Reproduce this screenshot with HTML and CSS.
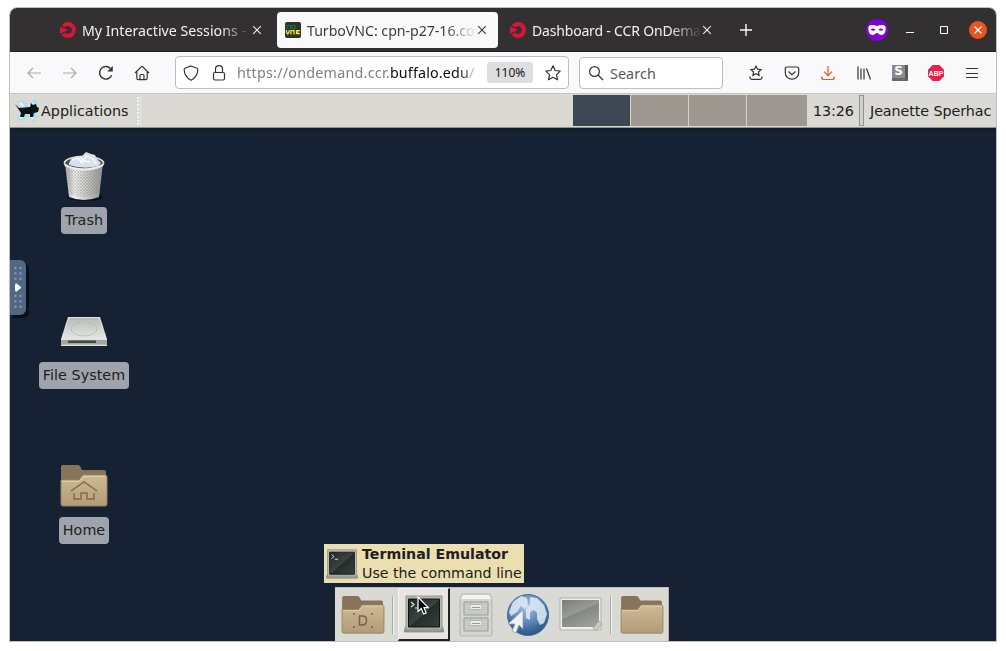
FILE: index.html
```html
<!DOCTYPE html>
<html lang="en">
<head>
<meta charset="utf-8">
<title>TurboVNC: cpn-p27-16</title>
<link rel="stylesheet" href="styles.css">
</head>
<body>
<svg class="defs" width="0" height="0" aria-hidden="true">
  <defs>
    <linearGradient id="tan" x1="0" y1="0" x2="0" y2="1"><stop offset="0" stop-color="#cdba94"/><stop offset="1" stop-color="#b19c78"/></linearGradient>
    <linearGradient id="metal" x1="0" y1="0" x2="1" y2="0"><stop offset="0" stop-color="#a3a3a0"/><stop offset=".25" stop-color="#eeeeec"/><stop offset=".6" stop-color="#c4c4c1"/><stop offset="1" stop-color="#90908d"/></linearGradient>
    <linearGradient id="screen" x1="0" y1="0" x2="1" y2="1"><stop offset="0" stop-color="#222825"/><stop offset=".5" stop-color="#3b4440"/><stop offset=".52" stop-color="#252d2a"/><stop offset="1" stop-color="#36413c"/></linearGradient>
    <linearGradient id="drive" x1="0" y1="0" x2="0" y2="1"><stop offset="0" stop-color="#b9bcb7"/><stop offset="1" stop-color="#e6e7e4"/></linearGradient>
    <linearGradient id="gray" x1="0" y1="0" x2=".6" y2="1"><stop offset="0" stop-color="#7b7d78"/><stop offset=".5" stop-color="#989a95"/><stop offset=".54" stop-color="#858782"/><stop offset="1" stop-color="#9a9c97"/></linearGradient>
    <radialGradient id="globe" cx=".45" cy=".3" r=".7"><stop offset="0" stop-color="#a9c5e5"/><stop offset=".6" stop-color="#5681b5"/><stop offset="1" stop-color="#2d527f"/></radialGradient>
    <pattern id="mesh" width="3" height="3" patternUnits="userSpaceOnUse"><path d="M0 0l3 3M3 0L0 3" stroke="#777" stroke-width=".6"/></pattern>
    <symbol id="folder" viewBox="0 0 48 44">
      <path d="M1 3q0-2 2-2h15q2 0 3 3l1 2h22q2 0 2 2v10H1z" fill="#87745a"/>
      <path d="M1 16h18l4-5h22q2 0 2 2v27q0 2-2 2H3q-2 0-2-2z" fill="url(#tan)" stroke="#96825f"/>
      <path d="M2 17.200h17.500l4-5H46" fill="none" stroke="#e3d5b6"/>
    </symbol>
    <symbol id="terminal" viewBox="0 0 40 38">
      <path d="M2 1h36v30l2 5q0 1-1 1H1q-1 0-1-1l2-5z" fill="#999c98" stroke="#777a75" stroke-width=".7"/>
      <path d="M2.500 1.500h35v32h-35z" fill="#b7bab6"/>
      <path d="M4.500 4h31v28h-31z" fill="url(#screen)" stroke="#111"/>
      <path d="M7 7l3 2.500L7 12M11 13h4" fill="none" stroke="#dfe3df" stroke-width="1.200"/>
    </symbol>
    <symbol id="ood" viewBox="0 0 16 16">
      <path d="M3.200 4.300A6 6 0 1 1 3.200 11.700" fill="none" stroke="#dc1438" stroke-width="4"/>
      <path d="M0 4.500L8 8l-8 3.800z" fill="#dc1438"/>
    </symbol>
    <symbol id="close" viewBox="0 0 10 10"><path d="M1.200 1.200l7.600 7.600M8.800 1.200L1.200 8.800" fill="none" stroke="currentColor" stroke-width="1.100"/></symbol>
  </defs>
</svg>
<main class="window">
  <header class="titlebar">
    <div class="tab tab-first">
      <svg class="favicon"><use href="#ood"/></svg>
      <span class="tab-label label-one">My Interactive Sessions - C</span>
      <svg class="tab-close"><use href="#close"/></svg>
    </div>
    <div class="tab tab-active">
      <svg class="favicon" viewBox="0 0 16 16"><rect width="16" height="16" rx="2" fill="#303030"/>
        <path d="M2 7V3.500h3.200V7M6.800 3.500H10V6.500H6.800z" fill="none" stroke="#087c22" stroke-width="1.200"/>
        <path d="M1.500 8v2l1.300 2 1.300-2V8M6 12.500V8.700h3v3.800M15 8.700h-3.500v3H15M11.500 10.200h2" fill="none" stroke="#f2e52a" stroke-width="1.300"/></svg>
      <span class="tab-label label-two">TurboVNC: cpn-p27-16.co</span>
      <svg class="tab-close"><use href="#close"/></svg>
    </div>
    <div class="tab">
      <svg class="favicon"><use href="#ood"/></svg>
      <span class="tab-label label-three">Dashboard - CCR OnDema</span>
      <svg class="tab-close"><use href="#close"/></svg>
    </div>
    <svg class="new-tab" viewBox="0 0 12 12"><path d="M6 0v12M0 6h12" stroke="#fbfbfe" stroke-width="1.400"/></svg>
    <div class="window-controls">
      <svg width="22" height="22" viewBox="0 0 22 22"><circle cx="11" cy="11" r="11" fill="#8000d7"/><path d="M2.300 9q0-3 3.500-3Q9 6 11 7q2-1 5.200-1 3.500 0 3.500 3 0 7-4.200 7-2 0-3-1.500-1.500-1-3 0Q8.500 16 6.500 16 2.300 16 2.300 9z" fill="#fff"/><path d="M4.700 10.700q2-2.500 4.800 0-2.400 2.200-4.800 0zM12.500 10.700q2.400-2.500 4.800 0-2.400 2.200-4.800 0z" fill="#8000d7"/></svg>
      <svg width="8" height="12" viewBox="0 0 8 12"><path d="M0 8.500h8" stroke="#fff"/></svg>
      <svg width="8" height="8" viewBox="0 0 8 8"><path d="M.5.500h7v7h-7z" fill="none" stroke="#fff"/></svg>
      <svg width="18" height="18" viewBox="0 0 18 18"><circle cx="9" cy="9" r="9" fill="#e95420"/><path d="M5.500 5.500l7 7M12.500 5.500l-7 7" stroke="#fff" stroke-width="1.200"/></svg>
    </div>
  </header>

  <nav class="toolbar">
    <div class="nav-buttons">
      <svg class="disabled" viewBox="0 0 16 16"><path d="M15 8H2M7 3L2 8l5 5"/></svg>
      <svg class="disabled" viewBox="0 0 16 16"><path d="M1 8h13M9 3l5 5-5 5"/></svg>
      <svg viewBox="0 0 16 16"><path d="M13.700 10.200A6.300 6.300 0 1 1 12.500 3.500" stroke-width="1.400"/><path d="M14.800 1v5.500H9.300z" fill="#333" stroke="none"/></svg>
      <svg viewBox="0 0 16 16"><path d="M1 8l6.200-6.200q.8-.8 1.600 0L15 8M2.800 6.500v6.500q0 1.700 1.700 1.700h7q1.700 0 1.700-1.700V6.500M6 14.500v-4q0-1 1-1h2q1 0 1 1v4"/></svg>
    </div>
    <div class="urlbar">
      <svg class="line-icon" viewBox="0 0 16 16"><path d="M8 1l6 2.200q.8.300.8 1.200Q14.800 11.500 8 15.200 1.200 11.500 1.200 4.400q0-.9.800-1.200z"/></svg>
      <svg class="line-icon lock" viewBox="0 0 16 16"><rect x="2.500" y="7.500" width="11" height="7.500" rx="1.500"/><path d="M4.500 7V4.200a3.500 3.500 0 0 1 7 0V7"/></svg>
      <span class="url">https://ondemand.ccr.<b>buffalo.edu</b>/</span>
      <span class="zoom">110%</span>
      <svg class="line-icon" viewBox="0 0 16 16"><path d="M8 .8l2.200 4.700 5 .6-3.700 3.500 1 5.200L8 12.300l-4.500 2.500 1-5.200L.8 6.100l5-.6z" stroke-linejoin="round"/></svg>
    </div>
    <div class="search">
      <svg class="line-icon" viewBox="0 0 16 16"><circle cx="6.500" cy="6.500" r="4.900"/><path d="M10 10l5 5"/></svg>
      <span>Search</span>
    </div>
    <div class="actions">
      <svg viewBox="0 0 16 16"><path d="M8 1.200l1.600 3 3.400.5-2.500 2.300.6 3.400L8 8.800l-3.100 1.600.6-3.400L3 4.700l3.400-.5zM2 11.500v1q0 1.800 1.800 1.800h8.400q1.800 0 1.800-1.800v-1"/></svg>
      <svg viewBox="0 0 16 16"><path d="M3 2h10q1.700 0 1.700 1.700V8a6.700 6.200 0 0 1-13.400 0V3.700Q1.300 2 3 2zM4.500 6.500L8 9.800l3.500-3.300"/></svg>
      <svg class="download" viewBox="0 0 16 16"><path d="M8 1v9.500M4 6.700l4 4 4-4M1.700 11.500v1q0 2 2 2h8.600q2 0 2-2v-1"/></svg>
      <svg viewBox="0 0 16 16"><path d="M2 1.500v13M5 3.500v11M8 3.500v11M10.500 3.500l4 11"/></svg>
      <div class="s-badge">S</div>
      <svg viewBox="0 0 16 16"><path d="M4.700 0h6.600L16 4.700v6.600L11.300 16H4.700L0 11.300V4.700z" fill="#ed1e45" stroke="none"/><text class="abp" x="8" y="10.900" text-anchor="middle">ABP</text></svg>
      <svg viewBox="0 0 16 16"><path d="M2 3.500h12M2 8.500h12M2 12.500h12" stroke-width="1.100"/></svg>
    </div>
  </nav>

  <section class="remote">
    <div class="panel">
      <svg class="mouse" viewBox="0 0 26 26">
        <path d="M3 3l6-1 5 5 6-6 4 3-4 8 4 7-4 5-7-5-5 5-5-4 4-8z" fill="#b3dce6"/>
        <path d="M6 5l4 4M19 5l-4 4M6 20l4-4M19 21l-3-4" stroke="#e0f3f7" stroke-width="2.500"/>
        <path d="M1 6l4 4 11-1 1-4 2 2 3-1 1 3 2 1-1 4-4 1-1 4h-3v-3h-5l-1 3H6l1-4-2-3z" fill="#0c1315"/>
      </svg>
      <span class="apps">Applications</span>
      <span class="grip"></span>
      <div class="workspaces"><i class="current"></i><i></i><i></i><i></i></div>
      <span class="clock">13:26</span>
      <span class="handle"></span>
      <span class="user">Jeanette Sperhac</span>
    </div>
    <div class="desktop">
      <div class="icons">
        <div class="launcher">
          <svg class="trash" width="48" height="54" viewBox="0 0 48 54">
            <ellipse cx="25" cy="46" rx="18" ry="4" fill="#09121d"/>
            <path d="M5 12l4 34q15 6 30 0l4-34z" fill="url(#metal)"/><path d="M7 16l3 27q14 6 28 0l3-27z" fill="url(#mesh)" opacity=".45"/>
            <ellipse cx="24" cy="12" rx="19.500" ry="6.500" fill="#464b50" stroke="#d7d7d3" stroke-width="1.800"/>
            <path d="M9 12l3-5 6-2 4 0 4-4 5 2 4 1 2 4 4 4-3 3q-14 4-29-1z" fill="#d8e0ec"/>
            <path d="M12 9l6-2 4 5 4-7 7 3 3 5M20 6l4 4 6 1" fill="none" stroke="#fff" stroke-width="1.300"/>
            <path d="M5 14q18 9 38 0" fill="none" stroke="#ededeb" stroke-width="2"/>
          </svg>
          <span>Trash</span>
        </div>
        <div class="launcher">
          <svg width="48" height="54" viewBox="0 0 48 54">
            <path d="M8 13h32l7 22v7H1v-7z" fill="#dfe0dd"/><path d="M9 14h30l7 21H2z" fill="url(#drive)"/>
            <ellipse cx="24" cy="25" rx="13" ry="7" fill="none" stroke="#bdc0bb"/><ellipse cx="24" cy="26" rx="5" ry="2.500" fill="#d3d6d0"/>
            <path d="M1 36h46v5H1z" fill="#a3a5a0"/><path d="M8 36.500h28v2.500H8z" fill="#454843"/><path d="M2 41h44" stroke="#d4d5d2"/>
          </svg>
          <span>File System</span>
        </div>
        <div class="launcher">
          <svg width="48" height="54" viewBox="0 0 48 54"><use href="#folder" y="5" width="48" height="44"/><path d="M11 32l13-9 13 9M14 34v6h7v-6h6v6h7v-6" fill="none" stroke="#816c49" stroke-width="1.500"/></svg>
          <span>Home</span>
        </div>
      </div>

      <div class="vnc-handle"><svg width="17" height="55" viewBox="0 0 17 55">
        <path d="M5.500 8v14M10.500 8v14M5.500 36v14M10.500 36v14" stroke="#8798b1" stroke-width="2.400" stroke-linecap="round" stroke-dasharray="0 5.400"/>
        <path d="M5.500 24.500q0-1 1-.5l4.500 3.500-4.500 3.500q-1 .5-1-.5z" fill="#fff" stroke="#fff"/></svg></div>

      <div class="tooltip">
        <svg width="32" height="30" viewBox="0 0 40 38" preserveAspectRatio="none"><use href="#terminal" width="40" height="38"/></svg>
        <div><strong>Terminal Emulator</strong><p>Use the command line</p></div>
      </div>
      <div class="dock">
        <svg class="d1" width="44" height="40" viewBox="0 0 44 40"><use href="#folder" width="44" height="40"/><path d="M12 19h2M30 19h2M12 32h2M30 32h2" stroke="#75624a" stroke-width="1.500"/><path d="M18.500 21h3q4 0 4 4.500t-4 4.500h-3z" fill="none" stroke="#75624a" stroke-width="1.500"/></svg>
        <span class="divider"></span>
        <div class="pressed"><svg width="40" height="38"><use href="#terminal" width="40" height="38"/></svg></div>
        <svg class="d3" width="34" height="44" viewBox="0 0 34 44">
          <path d="M3 1h28l2 4v36q0 2-2 2H3q-2 0-2-2V5z" fill="#d3d4d0" stroke="#b5b7b1"/><path d="M4 2h26l2 4H2z" fill="#f4f4f2"/>
          <g fill="#c8cac4" stroke="#999c95"><path d="M5 9h24v13H5zM5 25h24v13H5z"/><path d="M11 11.500h12v5H11zM11 27.500h12v5H11z" fill="#eaeae7" stroke="#b5b7b1"/></g><path d="M13 14.500h8M13 30.500h8" stroke="#999"/>
        </svg>
        <svg class="d4" width="44" height="44" viewBox="0 0 44 44">
          <circle cx="22" cy="22" r="20.500" fill="url(#globe)" stroke="#436c9c"/>
          <path d="M3 19l4-10 8-6 6 2 1 8-3 3-4-3-4 6-6 4zM24 4l7 1 7 7 3 9-3 9-4 2-3-6v-6l-3-3-4 2v8l-4-2v-9l4-5z" fill="#e1ebf4" opacity=".85"/>
          <path d="M17 17v19l-4-4-3 8-4-2 3-7H2z" fill="#f2f2f0" stroke="#8598ae" stroke-width=".7"/>
        </svg>
        <svg class="d5" width="44" height="36" viewBox="0 0 44 36"><path d="M1 1h41v32H1z" fill="#eeeeeb" stroke="#adafa9"/><path d="M3 3h37v27H3z" fill="url(#gray)"/><path d="M34 31l6-7 3 3-6 7z" fill="#c9cbc5" stroke="#a5a7a0"/></svg>
        <span class="divider last"></span>
        <svg width="44" height="40"><use href="#folder" width="44" height="40"/></svg>
      </div>
      <svg class="cursor" viewBox="0 0 12 19"><path d="M1 1v14.500l3.300-3L6.600 18l2.600-1.100L7 11.700h4.300z" fill="#050505" stroke="#fff" stroke-width="1.200"/></svg>
    </div>
  </section>
</main>
</body>
</html>
```
FILE: styles.css
```css
* { box-sizing: border-box; }
body { margin: 0; background: #fff; font-family: "Noto Sans", sans-serif; overflow: hidden; }
svg { display: block; flex: none; }
.defs { position: absolute; }
.window { width: 988px; height: 635px; margin: 7px 0 0 9px; border: 1px solid #bfbfc0; border-radius: 8px 8px 0 0; overflow: hidden; display: flex; flex-direction: column; }
.titlebar { height: 44px; flex: none; background: #333031; border-bottom: 1px solid #211f20; color: #f0f0f3; display: flex; align-items: center; padding: 0 9px 0 42px; }
.tab { width: 221px; height: 36px; margin-right: 4px; padding: 1px 11px 0 8px; border-radius: 4px; display: flex; align-items: center; flex: none; }
.tab-active { background: #f9f9fb; color: #3d3c42; }
.favicon { width: 16px; height: 16px; margin-right: 6px; }
.tab-label { width: 168px; padding-top: 1px; font-size: 14.3px; line-height: 20px; white-space: nowrap; overflow: hidden; -webkit-mask-image: linear-gradient(to right, #000 138px, transparent 170px); mask-image: linear-gradient(to right, #000 138px, transparent 170px); }
.label-one { font-size: 14.2px; }
.label-two { font-size: 14.2px; letter-spacing: -.05px; }
.label-three { font-size: 14px; letter-spacing: -.18px; }
.tab-close { width: 10px; height: 10px; margin-left: 2px; }
.new-tab { width: 12px; height: 12px; margin-left: 13px; }
.window-controls { margin-left: auto; display: flex; align-items: center; }
.window-controls svg:nth-child(2) { margin-left: 18px; }
.window-controls svg:nth-child(3) { margin-left: 26px; }
.window-controls svg:nth-child(4) { margin-left: 21px; }
.toolbar { height: 42px; flex: none; background: #f9f9fb; border-bottom: 1px solid #c4c4c5; display: flex; align-items: center; }
.nav-buttons { width: 165px; padding-left: 16px; display: flex; gap: 20px; }
.nav-buttons svg, .actions svg, .line-icon { width: 16px; height: 16px; fill: none; stroke: #333; stroke-width: 1.2; }
.nav-buttons .disabled { stroke: #aaaaab; }
.urlbar { width: 394px; height: 33px; padding: 0 7px; background: #fff; border: 1px solid #bebec0; border-radius: 4px; display: flex; align-items: center; }
.lock { margin-left: 12px; }
.url { width: 242px; margin: 0 8px 0 10px; padding-top: 1px; overflow: hidden; white-space: nowrap; color: #808083; font-size: 14.3px; letter-spacing: .25px; line-height: 22px; -webkit-mask-image: linear-gradient(to right, #000 220px, transparent 250px); mask-image: linear-gradient(to right, #000 220px, transparent 250px); }
.url b { color: #0c0c0d; font-weight: 400; letter-spacing: .15px; }
.zoom { width: 46px; height: 21px; margin-right: 12px; flex: none; background: #dedede; border-radius: 3px; color: #15141a; font-size: 12px; line-height: 21px; text-align: center; }
.search { width: 144px; height: 32px; margin-left: 10px; padding-left: 8px; display: flex; align-items: center; gap: 6px; background: #fff; border: 1px solid #bebec0; border-radius: 4px; color: #58575c; font-size: 14.3px; letter-spacing: .1px; }
.search span { padding-top: 1px; }
.actions { margin-left: 25px; display: flex; gap: 20px; align-items: center; }
.actions .download { stroke: #e95420; }
.s-badge { width: 16px; height: 16px; background: #8a8b8e; border-right: 3px solid #58595d; border-bottom: 3px solid #68696c; color: #fff; font: bold 12px/13px "DejaVu Sans", sans-serif; text-align: center; }
.abp { fill: #fff; stroke: none; font: bold 7px "Liberation Sans", sans-serif; }
.remote { flex: 1; display: flex; flex-direction: column; font-family: "DejaVu Sans", sans-serif; color: #202020; }
.panel { height: 34px; flex: none; background: #dad9d4; border-bottom: 1px solid #8d9290; display: flex; align-items: center; font-size: 14.3px; white-space: nowrap; }
.mouse { width: 26px; height: 26px; margin: 0 1px 0 4px; }
.apps { width: 97px; letter-spacing: .02px; }
.grip { width: 4px; height: 28px; margin-left: -1px; border-left: 2px dotted #f5f5f2; border-right: 1px dotted #f5f5f2; }
.workspaces { margin-left: 432px; height: 31px; display: grid; grid-template-columns: 57px 57px 57px 60px; gap: 1px; background: #d5d2cc; }
.workspaces i { background: #9f9891; }
.workspaces .current { background: #3b4854; }
.clock { margin-left: 6px; width: 46px; letter-spacing: -.1px; }
.handle { width: 5px; height: 31px; border: 1px solid #929490; background: #d0d0cc; }
.user { margin-left: 6px; letter-spacing: -.08px; }
.desktop { flex: 1; background: linear-gradient(#0e1c2b, #162233 5px); position: relative; padding: 21px 0 0 24px; }
.icons { width: 100px; }
.launcher { height: 155px; display: flex; flex-direction: column; align-items: center; }
.trash { transform: translateY(2px); }
.launcher span { margin-top: 4px; height: 27px; padding: 0 4px; border-radius: 4px; background: #9fa4ac; font-size: 14.3px; letter-spacing: .06px; line-height: 26px; white-space: nowrap; }
.vnc-handle { position: absolute; left: 0; top: 132px; width: 16px; height: 55px; background: #536782; border-radius: 0 6px 6px 0; box-shadow: 3px 3px 1px #07101b; }
.tooltip { position: absolute; left: 314px; top: 416px; width: 200px; height: 39px; padding: 0 2px; display: flex; align-items: center; gap: 4px; background: #ebdfb0; font-size: 14.2px; line-height: 18px; white-space: nowrap; }
.tooltip strong { position: relative; top: -1px; }
.tooltip p { margin: 0; }
.dock { position: absolute; left: 325px; top: 459px; width: 334px; height: 54px; border-top: 1px solid #bfc0bd; border-right: 1px solid #b1b1ac; background: #dadad5; display: flex; align-items: center; padding-left: 6px; }
.divider { width: 2px; height: 38px; margin-left: 7px; border-left: 1px solid #aaa; border-right: 1px solid #f1f1ee; }
.pressed { width: 52px; height: 53px; margin-left: 4px; background: #e8e5e0; border: 1px solid #f3f2ee; border-right: 2px solid #222; border-bottom: 2px solid #222; display: flex; align-items: center; justify-content: center; }
.d3 { margin-left: 9px; }
.d4 { margin-left: 13px; }
.d5 { margin-left: 9px; }
.last { margin-right: 8px; }
.cursor { position: absolute; left: 407px; top: 468px; width: 12px; height: 19px; }
```
